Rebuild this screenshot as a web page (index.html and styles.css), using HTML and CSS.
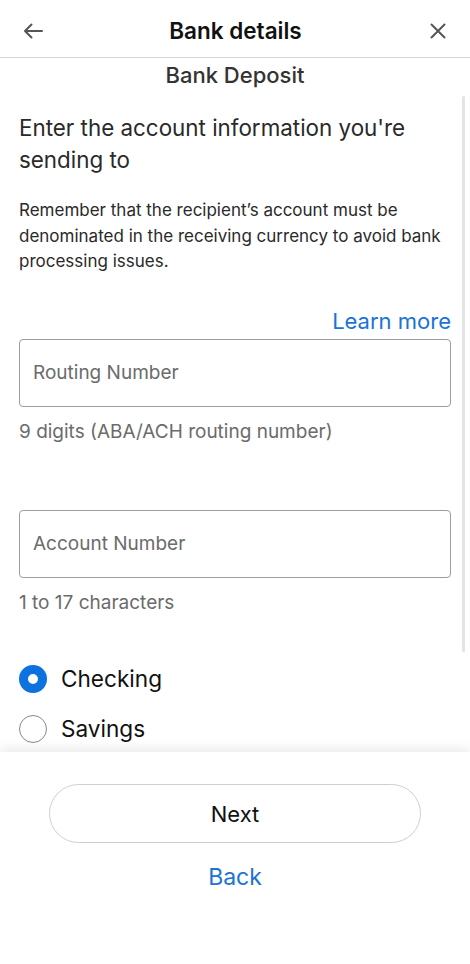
FILE: index.html
```html
<!DOCTYPE html>
<html>
<head>
<meta charset="utf-8">
<link rel="stylesheet" href="styles.css">
</head>
<body>
<div class="app">
  <header class="topbar">
    <svg class="icon" width="24" height="24" viewBox="0 0 24 24"><path d="M21 12H4M10.5 5.5L4 12l6.5 6.5" fill="none" stroke="#555" stroke-width="2" stroke-linecap="round" stroke-linejoin="round"/></svg>
    <h1 class="title">Bank details</h1>
    <svg class="icon" width="24" height="24" viewBox="0 0 24 24"><path d="M5.5 5.5l13 13M18.5 5.5l-13 13" fill="none" stroke="#555" stroke-width="2" stroke-linecap="round"/></svg>
  </header>
  <main class="scroll">
    <div class="scrollbar"></div>
    <h2 class="subtitle">Bank Deposit</h2>
    <div class="content">
      <p class="heading">Enter the account information you're sending to</p>
      <p class="note">Remember that the recipient’s account must be denominated in the receiving currency to avoid bank processing issues.</p>
      <div class="learn"><a class="link">Learn more</a></div>
      <div class="field">
        <div class="input">Routing Number</div>
        <div class="helper">9 digits (ABA/ACH routing number)</div>
      </div>
      <div class="field second">
        <div class="input">Account Number</div>
        <div class="helper">1 to 17 characters</div>
      </div>
      <div class="radios">
        <div class="radio-row"><span class="radio checked"></span><span class="radio-label">Checking</span></div>
        <div class="radio-row"><span class="radio"></span><span class="radio-label">Savings</span></div>
      </div>
    </div>
  </main>
  <footer class="footer">
    <button class="btn-next">Next</button>
    <a class="link back">Back</a>
  </footer>
</div>
</body>
</html>
```
FILE: styles.css
```css
* { box-sizing: border-box; }
html, body { margin: 0; padding: 0; }
body {
  width: 470px;
  height: 964px;
  font-family: Inter, "Liberation Sans", sans-serif;
  color: #222;
  background: #fff;
  overflow: hidden;
}
.app {
  display: flex;
  flex-direction: column;
  height: 964px;
}
.topbar {
  height: 58px;
  flex: none;
  display: flex;
  align-items: center;
  justify-content: space-between;
  padding: 4px 20px 0 21px;
  border-bottom: 1px solid #d6d6d6;
}
.title {
  margin: 0;
  font-size: 22.5px;
  font-weight: 600;
  color: #111;
}
.scroll {
  flex: 1;
  position: relative;
  overflow: hidden;
}
.scrollbar {
  position: absolute;
  right: 5px;
  top: 38px;
  width: 3px;
  height: 556px;
  background: #e4e4e4;
  border-radius: 2px;
}
.subtitle {
  margin: 2px 0 0;
  text-align: center;
  font-size: 22px;
  font-weight: 500;
  color: #333;
  line-height: 30px;
}
.content {
  padding: 0 19px;
}
.heading {
  margin: 22px 0 0;
  font-size: 22.4px;
  line-height: 32px;
  color: #2a2a2a;
}
.note {
  margin: 22px 0 0;
  font-size: 17px;
  line-height: 25.5px;
  color: #2a2a2a;
}
.learn {
  display: flex;
  justify-content: flex-end;
  margin-top: 32px;
}
.link {
  color: #1a73d6;
  font-size: 22px;
  line-height: 28px;
}
.field { margin-top: 4px; }
.field.second { margin-top: 66px; }
.input {
  height: 68px;
  border: 1px solid #9c9c9c;
  border-radius: 4px;
  display: flex;
  align-items: center;
  padding-left: 13px;
  font-size: 19px;
  color: #6b6b6b;
}
.helper {
  margin-top: 13px;
  font-size: 19px;
  color: #6b6b6b;
  line-height: 24px;
}
.radios {
  margin-top: 50px;
  display: flex;
  flex-direction: column;
  gap: 22px;
}
.radio-row {
  display: flex;
  align-items: center;
  gap: 14px;
  height: 28px;
}
.radio {
  width: 28px;
  height: 28px;
  border-radius: 50%;
  border: 1px solid #888;
  flex: none;
}
.radio.checked {
  border: 9px solid #0b72e0;
}
.radio-label {
  font-size: 22.6px;
  color: #111;
}
.footer {
  flex: none;
  height: 212px;
  display: flex;
  flex-direction: column;
  align-items: center;
  padding-top: 32px;
  background: #fff;
  box-shadow: 0 -4px 10px rgba(0,0,0,0.08);
  position: relative;
}
.btn-next {
  width: 372px;
  height: 59px;
  border: 1px solid #cfcfcf;
  border-radius: 30px;
  background: #fff;
  font-family: inherit;
  font-size: 22px;
  color: #111;
}
.back {
  margin-top: 20px;
  font-size: 23px;
}
```
